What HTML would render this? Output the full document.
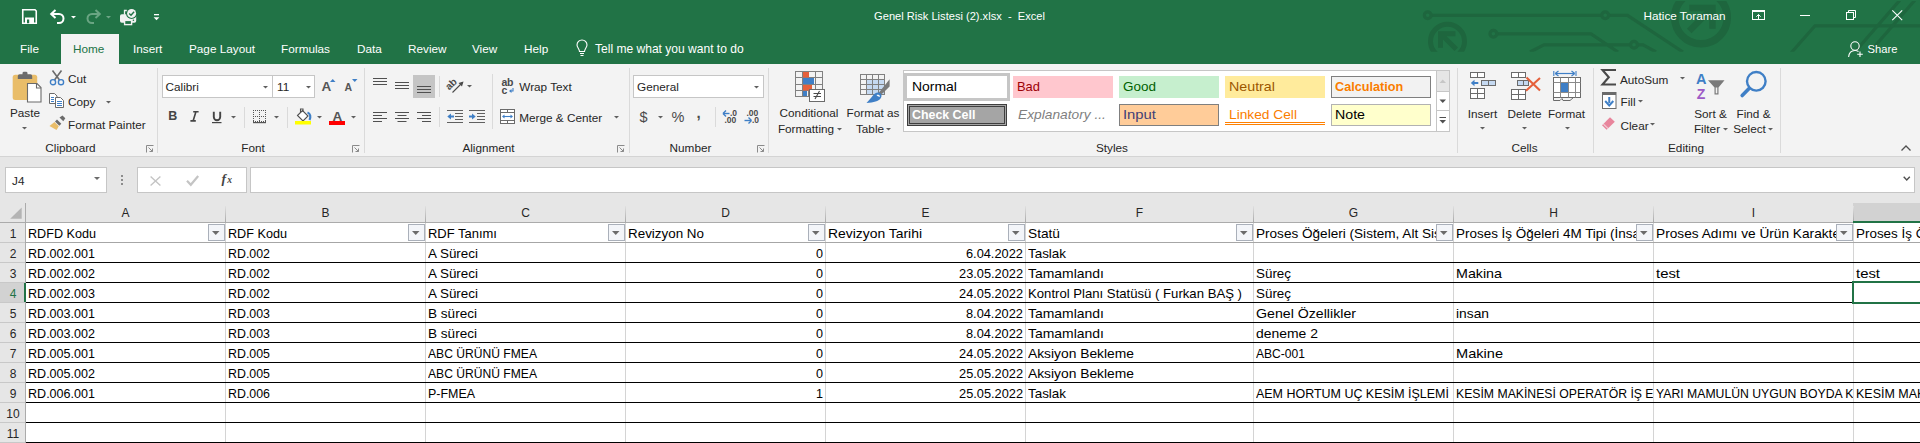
<!DOCTYPE html><html><head><meta charset="utf-8"><style>
html,body{margin:0;padding:0;}
body{width:1920px;height:443px;overflow:hidden;position:relative;background:#ffffff;font-family:'Liberation Sans', sans-serif;}
.t{position:absolute;white-space:pre;line-height:1.5;}
svg{overflow:visible}
</style></head><body>
<div style="position:absolute;left:0px;top:0px;width:1920px;height:64px;background:#217346;"></div>
<svg style="position:absolute;left:1380px;top:0px;" width="540" height="52" viewBox="0 0 540 52"><defs><clipPath id="cp"><rect x="0" y="1" width="540" height="50.8"/></clipPath></defs>
<g clip-path="url(#cp)">
<g fill="none" stroke="#1e663e" stroke-width="3.2">
<path d="M51 15.3 H221.7 M228.7 15.3 H247.5 L303 52"/>
<circle cx="47.7" cy="15.3" r="3.4"/><circle cx="225.2" cy="15.3" r="3.4"/>
<path d="M116.8 33.8 H211 L238 52 M150 52 L164 44.8 H250.6 M257.4 44.8 H263 L276 52"/>
<circle cx="113.4" cy="33.8" r="3.4"/><circle cx="254" cy="44.8" r="3.4"/>
<path d="M411 53 L435 25.8 H545"/>
<path d="M474.8 52 L520 0 M489.8 52 L535 0"/>
</g>
<circle cx="67.5" cy="41.3" r="17" fill="none" stroke="#1e663e" stroke-width="5"/>
<circle cx="321" cy="17.5" r="26.3" fill="none" stroke="#1e663e" stroke-width="7.5"/>
<path d="M58 31.2 H75.4 V36.2 H66.5 L78 47.5 L74.5 51 L63 39.5 V47.8 H58 Z" fill="#1e663e"/>
<path d="M335.7 4.7 H309.3 V11.2 H324.5 L307 28.7 L311.5 33.2 L329.2 15.5 V28.8 H335.7 Z" fill="#1e663e"/>
</g></svg>
<svg style="position:absolute;left:22px;top:9px;" width="15" height="15" viewBox="0 0 15 15"><path d="M0.75 0.75 H13 L14.25 2 V14.25 H0.75 Z" fill="none" stroke="#ffffff" stroke-width="1.6"/><rect x="3" y="8.5" width="9" height="5.75" fill="#ffffff"/><rect x="5" y="10.5" width="2.2" height="3.75" fill="#217346"/></svg>
<svg style="position:absolute;left:50px;top:9px;" width="16" height="15" viewBox="0 0 16 15"><path d="M2 5 H9 A4.5 4.5 0 0 1 9 14 H7" fill="none" stroke="#ffffff" stroke-width="2"/><path d="M5.5 1 L1.2 5 L5.5 9" fill="none" stroke="#ffffff" stroke-width="2"/></svg>
<svg style="position:absolute;left:70.0px;top:14.5px;" width="7" height="5" viewBox="0 0 7 5"><path d="M1 1 H6 L3.5 3.5 Z" fill="#ffffff"/></svg>
<svg style="position:absolute;left:85px;top:9px;" width="16" height="15" viewBox="0 0 16 15"><path d="M14 5 H7 A4.5 4.5 0 0 0 7 14 H9" fill="none" stroke="#6aa583" stroke-width="2"/><path d="M10.5 1 L14.8 5 L10.5 9" fill="none" stroke="#6aa583" stroke-width="2"/></svg>
<svg style="position:absolute;left:105.0px;top:14.5px;" width="7" height="5" viewBox="0 0 7 5"><path d="M1 1 H6 L3.5 3.5 Z" fill="#6da585"/></svg>
<svg style="position:absolute;left:120px;top:9px;" width="18" height="18" viewBox="0 0 18 18"><rect x="0" y="5.2" width="16.2" height="8.6" rx="1.8" fill="#f2f2f2"/><circle cx="11.6" cy="4.4" r="5.6" fill="#217346"/><circle cx="11.6" cy="4.4" r="4.5" fill="#f2f2f2"/><path d="M9.2 4.5 L11 6.3 L14.1 2.7" fill="none" stroke="#217346" stroke-width="1.4"/><path d="M6.8 1.5 H4.5 V5.8" fill="none" stroke="#f2f2f2" stroke-width="1.3"/><rect x="4.6" y="11.4" width="7" height="4.2" fill="#217346" stroke="#f2f2f2" stroke-width="1.4"/><circle cx="13.4" cy="11.2" r="0.8" fill="#217346"/></svg>
<svg style="position:absolute;left:153px;top:13px;" width="8" height="8" viewBox="0 0 8 8"><rect x="1" y="1" width="5" height="1.3" fill="#ffffff"/><path d="M0.6 4.2 H6.4 L3.5 7.2 Z" fill="#ffffff"/></svg>
<div class="t" style="left:659.5px;width:600px;text-align:center;top:7.83px;font-size:11.1px;color:#ffffff;font-weight:normal;">Genel Risk Listesi (2).xlsx  -  Excel</div>
<div class="t" style="left:1643.5px;top:7.12px;font-size:11.75px;color:#ffffff;font-weight:normal;">Hatice Toraman</div>
<svg style="position:absolute;left:1752px;top:10px;" width="14" height="11" viewBox="0 0 14 11"><rect x="0.5" y="0.5" width="12" height="9" fill="none" stroke="#ffffff"/><path d="M0.5 1.5 H12.5" stroke="#ffffff"/><path d="M6.5 4.5 V9.5 M4.3 6.7 L6.5 4.5 L8.7 6.7" fill="none" stroke="#ffffff"/></svg>
<div style="position:absolute;left:1800px;top:15px;width:10px;height:1px;background:#ffffff;"></div>
<svg style="position:absolute;left:1846px;top:10px;" width="11" height="11" viewBox="0 0 11 11"><rect x="0.5" y="2.5" width="7" height="7" fill="none" stroke="#ffffff"/><path d="M2.5 2.5 V0.5 H9.5 V7.5 H7.5" fill="none" stroke="#ffffff"/></svg>
<svg style="position:absolute;left:1892px;top:10px;" width="11" height="11" viewBox="0 0 11 11"><path d="M0.3 0.3 L10.2 10.2 M10.2 0.3 L0.3 10.2" stroke="#ffffff" stroke-width="1.05"/></svg>
<div style="position:absolute;left:61px;top:34px;width:58px;height:30px;background:#f3f3f3;"></div>
<div class="t" style="left:20px;top:40.12px;font-size:11.75px;color:#ffffff;font-weight:normal;">File</div>
<div class="t" style="left:73px;top:40.12px;font-size:11.75px;color:#217346;font-weight:normal;">Home</div>
<div class="t" style="left:133px;top:40.12px;font-size:11.75px;color:#ffffff;font-weight:normal;">Insert</div>
<div class="t" style="left:189px;top:40.12px;font-size:11.75px;color:#ffffff;font-weight:normal;">Page Layout</div>
<div class="t" style="left:281px;top:40.12px;font-size:11.75px;color:#ffffff;font-weight:normal;">Formulas</div>
<div class="t" style="left:357px;top:40.12px;font-size:11.75px;color:#ffffff;font-weight:normal;">Data</div>
<div class="t" style="left:408px;top:40.12px;font-size:11.75px;color:#ffffff;font-weight:normal;">Review</div>
<div class="t" style="left:472px;top:40.12px;font-size:11.75px;color:#ffffff;font-weight:normal;">View</div>
<div class="t" style="left:524px;top:40.12px;font-size:11.75px;color:#ffffff;font-weight:normal;">Help</div>
<svg style="position:absolute;left:576px;top:40px;" width="12" height="17" viewBox="0 0 12 17"><path d="M3.5 11.5 C3.5 9 1 7.5 1 5 A5 5 0 0 1 11 5 C11 7.5 8.5 9 8.5 11.5 Z" fill="none" stroke="#ffffff" stroke-width="1.1"/><path d="M4 13.5 H8 M4.5 15.5 H7.5" stroke="#ffffff" stroke-width="1.1"/></svg>
<div class="t" style="left:595px;top:39.79px;font-size:12.05px;color:#ffffff;font-weight:normal;">Tell me what you want to do</div>
<svg style="position:absolute;left:1848px;top:41px;" width="16" height="17" viewBox="0 0 16 17"><circle cx="7" cy="5" r="4.2" fill="none" stroke="#ffffff" stroke-width="1.1"/><path d="M0.6 16 C1 11.5 3.5 9.5 7 9.5 C8.5 9.5 9.6 9.9 10.5 10.4" fill="none" stroke="#ffffff" stroke-width="1.1"/><path d="M12 10.5 V16 M9.2 13.3 H14.8" stroke="#ffffff" stroke-width="1.1"/></svg>
<div class="t" style="left:1867.5px;top:40.72px;font-size:11.2px;color:#ffffff;font-weight:normal;">Share</div>
<div style="position:absolute;left:0px;top:64px;width:1920px;height:92px;background:#f3f3f3;"></div>
<div style="position:absolute;left:0px;top:156px;width:1920px;height:1px;background:#d4d4d4;"></div>
<div style="position:absolute;left:0px;top:157px;width:1920px;height:46px;background:#e6e6e6;"></div>
<svg style="position:absolute;left:12px;top:71px;" width="30" height="32" viewBox="0 0 30 32"><rect x="0.7" y="3.7" width="24.5" height="25.3" rx="2.5" fill="#e9bd69"/>
<path d="M5.8 8 V5.2 Q5.8 3.2 7.8 3.2 H10.5 V2.2 Q10.5 0.8 12 0.8 H14 Q15.5 0.8 15.5 2.2 V3.2 H18.2 Q20.2 3.2 20.2 5.2 V8 Z" fill="#6b6b6b"/>
<path d="M15.5 12.5 H25 L29 16.5 V31 H15.5 Z" fill="#ffffff" stroke="#6b6b6b" stroke-width="1.1"/>
<path d="M24.5 12.5 V17 H29" fill="none" stroke="#6b6b6b" stroke-width="1.1"/></svg>
<div class="t" style="left:-275px;width:600px;text-align:center;top:104.12px;font-size:11.75px;color:#262626;font-weight:normal;">Paste</div>
<svg style="position:absolute;left:21.0px;top:126px;" width="7" height="5" viewBox="0 0 7 5"><path d="M1 1 H6 L3.5 3.5 Z" fill="#5f5f5f"/></svg>
<svg style="position:absolute;left:49px;top:70px;" width="16" height="16" viewBox="0 0 16 16"><path d="M3.5 0.5 L10.5 10 M12.5 0.5 L5.5 10" stroke="#6b6b6b" stroke-width="1.6"/><circle cx="4" cy="12.2" r="2.6" fill="none" stroke="#3f7fc6" stroke-width="1.4"/><circle cx="12" cy="12.2" r="2.6" fill="none" stroke="#3f7fc6" stroke-width="1.4"/></svg>
<div class="t" style="left:68px;top:70.12px;font-size:11.75px;color:#262626;font-weight:normal;">Cut</div>
<svg style="position:absolute;left:49px;top:93px;" width="16" height="16" viewBox="0 0 16 16"><path d="M0.5 0.5 H5.5 L8 3 V10.5 H0.5 Z" fill="#fff" stroke="#6b6b6b"/><path d="M2 4.5 H5 M2 6.5 H5 M2 8.5 H5" stroke="#3f7fc6"/><path d="M6.5 4.5 H11.5 L14.5 7.5 V14.5 H6.5 Z" fill="#fff" stroke="#6b6b6b"/><path d="M8 8.5 H13 M8 10.5 H13 M8 12.5 H13" stroke="#3f7fc6"/></svg>
<div class="t" style="left:68px;top:93.12px;font-size:11.75px;color:#262626;font-weight:normal;">Copy</div>
<svg style="position:absolute;left:105.0px;top:100px;" width="7" height="5" viewBox="0 0 7 5"><path d="M1 1 H6 L3.5 3.5 Z" fill="#5f5f5f"/></svg>
<svg style="position:absolute;left:49px;top:115px;" width="17" height="16" viewBox="0 0 17 16"><path d="M10.5 2.5 L13.5 0.5 L16.3 3.3 L14.3 6.3 Z" fill="#6b6b6b"/><path d="M8 4.5 L12.3 8.8 L10.3 10.8 L6 6.5 Z" fill="#6b6b6b"/><path d="M5.5 7 L9.8 11.3 L7.5 15 L0.5 11 Z" fill="#e9bd69"/></svg>
<div class="t" style="left:68px;top:116.12px;font-size:11.75px;color:#262626;font-weight:normal;">Format Painter</div>
<div class="t" style="left:-229.5px;width:600px;text-align:center;top:138.92px;font-size:11.75px;color:#262626;font-weight:normal;">Clipboard</div>
<svg style="position:absolute;left:146px;top:145px;" width="8" height="8" viewBox="0 0 8 8"><path d="M0.5 7.5 V0.5 H7.5" fill="none" stroke="#8a8a8a"/><path d="M2.5 2.5 L6.5 6.5 M3.5 6.5 H6.5 V3.5" fill="none" stroke="#8a8a8a"/></svg>
<div style="position:absolute;left:157px;top:68px;width:1px;height:85px;background:#dadada;"></div>
<div style="position:absolute;left:162px;top:75px;width:111px;height:23px;background:#ffffff;border:1px solid #c6c6c6;box-sizing:border-box;"></div>
<div style="position:absolute;left:272px;top:75px;width:43px;height:23px;background:#ffffff;border:1px solid #c6c6c6;box-sizing:border-box;"></div>
<div class="t" style="left:165.5px;top:78.12px;font-size:11.75px;color:#262626;font-weight:normal;">Calibri</div>
<svg style="position:absolute;left:262.0px;top:85px;" width="7" height="5" viewBox="0 0 7 5"><path d="M1 1 H6 L3.5 3.5 Z" fill="#5f5f5f"/></svg>
<div class="t" style="left:277px;top:78.12px;font-size:11.75px;color:#262626;font-weight:normal;">11</div>
<svg style="position:absolute;left:305.0px;top:85px;" width="7" height="5" viewBox="0 0 7 5"><path d="M1 1 H6 L3.5 3.5 Z" fill="#5f5f5f"/></svg>
<div class="t" style="left:321.5px;top:77.20px;font-size:13.5px;color:#555555;font-weight:bold;">A</div>
<svg style="position:absolute;left:330px;top:79px;" width="6" height="4" viewBox="0 0 6 4"><path d="M0 3 H5.5 L2.75 0 Z" fill="#3f7fc6"/></svg>
<div class="t" style="left:344.5px;top:80.49px;font-size:10.5px;color:#555555;font-weight:bold;">A</div>
<svg style="position:absolute;left:352px;top:79px;" width="6" height="4" viewBox="0 0 6 4"><path d="M0 0 H5.5 L2.75 3 Z" fill="#3f7fc6"/></svg>
<div class="t" style="left:168.2px;top:107.29px;font-size:12.5px;color:#444444;font-weight:bold;">B</div>
<svg style="position:absolute;left:190px;top:111px;" width="9" height="11" viewBox="0 0 9 11"><path d="M3.2 0.8 H8.6 M0.4 9.9 H5.8 M5.9 0.8 L3.1 9.9" fill="none" stroke="#444444" stroke-width="1.6"/></svg>
<svg style="position:absolute;left:212px;top:111px;" width="10" height="13" viewBox="0 0 10 13"><path d="M1.8 0.8 V6 A3.2 3.2 0 0 0 8.2 6 V0.8" fill="none" stroke="#444444" stroke-width="1.9"/><rect x="0" y="11" width="9.5" height="1.2" fill="#444444"/></svg>
<svg style="position:absolute;left:230.0px;top:115px;" width="7" height="5" viewBox="0 0 7 5"><path d="M1 1 H6 L3.5 3.5 Z" fill="#5f5f5f"/></svg>
<div style="position:absolute;left:244px;top:107px;width:1px;height:21px;background:#dadada;"></div>
<svg style="position:absolute;left:253px;top:110px;" width="14" height="14" viewBox="0 0 14 14"><rect x="0" y="0" width="1" height="1" fill="#555"/><rect x="2" y="0" width="1" height="1" fill="#555"/><rect x="4" y="0" width="1" height="1" fill="#555"/><rect x="6" y="0" width="1" height="1" fill="#555"/><rect x="8" y="0" width="1" height="1" fill="#555"/><rect x="10" y="0" width="1" height="1" fill="#555"/><rect x="12" y="0" width="1" height="1" fill="#555"/><rect x="0" y="6" width="1" height="1" fill="#555"/><rect x="2" y="6" width="1" height="1" fill="#555"/><rect x="4" y="6" width="1" height="1" fill="#555"/><rect x="6" y="6" width="1" height="1" fill="#555"/><rect x="8" y="6" width="1" height="1" fill="#555"/><rect x="10" y="6" width="1" height="1" fill="#555"/><rect x="12" y="6" width="1" height="1" fill="#555"/><rect x="0" y="11" width="1" height="1" fill="#555"/><rect x="2" y="11" width="1" height="1" fill="#555"/><rect x="4" y="11" width="1" height="1" fill="#555"/><rect x="6" y="11" width="1" height="1" fill="#555"/><rect x="8" y="11" width="1" height="1" fill="#555"/><rect x="10" y="11" width="1" height="1" fill="#555"/><rect x="12" y="11" width="1" height="1" fill="#555"/><rect x="0" y="2" width="1" height="1" fill="#555"/><rect x="0" y="4" width="1" height="1" fill="#555"/><rect x="0" y="8" width="1" height="1" fill="#555"/><rect x="0" y="10" width="1" height="1" fill="#555"/><rect x="6" y="2" width="1" height="1" fill="#555"/><rect x="6" y="4" width="1" height="1" fill="#555"/><rect x="6" y="8" width="1" height="1" fill="#555"/><rect x="6" y="10" width="1" height="1" fill="#555"/><rect x="12" y="2" width="1" height="1" fill="#555"/><rect x="12" y="4" width="1" height="1" fill="#555"/><rect x="12" y="8" width="1" height="1" fill="#555"/><rect x="12" y="10" width="1" height="1" fill="#555"/><rect x="0" y="12" width="13" height="1.2" fill="#555"/></svg>
<svg style="position:absolute;left:273.0px;top:115px;" width="7" height="5" viewBox="0 0 7 5"><path d="M1 1 H6 L3.5 3.5 Z" fill="#5f5f5f"/></svg>
<div style="position:absolute;left:287px;top:107px;width:1px;height:21px;background:#dadada;"></div>
<svg style="position:absolute;left:294px;top:108px;" width="18" height="18" viewBox="0 0 18 18"><path d="M3.5 7.5 L8.5 2.5 L14 8 L9 13 Z" fill="#fff" stroke="#505050" stroke-width="1.1"/><path d="M6.5 5 V1 H9 V4" fill="none" stroke="#505050" stroke-width="1.1"/><path d="M13.5 4.5 C16.5 5.5 17 9 15.5 12" fill="none" stroke="#3f7fc6" stroke-width="2.2"/><rect x="1" y="13" width="16" height="3.5" fill="#ffff00"/></svg>
<svg style="position:absolute;left:316.0px;top:115px;" width="7" height="5" viewBox="0 0 7 5"><path d="M1 1 H6 L3.5 3.5 Z" fill="#5f5f5f"/></svg>
<div class="t" style="left:332.5px;top:106.70px;font-size:13.5px;color:#555555;font-weight:bold;">A</div>
<div style="position:absolute;left:329px;top:121px;width:16px;height:4px;background:#ff0000;"></div>
<svg style="position:absolute;left:350.0px;top:115px;" width="7" height="5" viewBox="0 0 7 5"><path d="M1 1 H6 L3.5 3.5 Z" fill="#5f5f5f"/></svg>
<div class="t" style="left:-47px;width:600px;text-align:center;top:138.92px;font-size:11.75px;color:#262626;font-weight:normal;">Font</div>
<svg style="position:absolute;left:352px;top:145px;" width="8" height="8" viewBox="0 0 8 8"><path d="M0.5 7.5 V0.5 H7.5" fill="none" stroke="#8a8a8a"/><path d="M2.5 2.5 L6.5 6.5 M3.5 6.5 H6.5 V3.5" fill="none" stroke="#8a8a8a"/></svg>
<div style="position:absolute;left:364px;top:68px;width:1px;height:85px;background:#dadada;"></div>
<div style="position:absolute;left:413px;top:75px;width:22px;height:23px;background:#c5c5c5;"></div>
<svg style="position:absolute;left:373px;top:74px;" width="22" height="60" viewBox="0 0 22 60"><rect x="0" y="4" width="14" height="1" fill="#505050"/><rect x="0" y="7" width="14" height="1" fill="#505050"/><rect x="0" y="10" width="14" height="1" fill="#505050"/></svg>
<svg style="position:absolute;left:395px;top:74px;" width="22" height="60" viewBox="0 0 22 60"><rect x="0" y="8" width="14" height="1" fill="#505050"/><rect x="0" y="11" width="14" height="1" fill="#505050"/><rect x="0" y="14" width="14" height="1" fill="#505050"/></svg>
<svg style="position:absolute;left:417px;top:74px;" width="22" height="60" viewBox="0 0 22 60"><rect x="0" y="12" width="14" height="1" fill="#505050"/><rect x="0" y="15" width="14" height="1" fill="#505050"/><rect x="0" y="18" width="14" height="1" fill="#505050"/></svg>
<div style="position:absolute;left:439px;top:76px;width:1px;height:21px;background:#dadada;"></div>
<svg style="position:absolute;left:446px;top:78px;" width="20" height="16" viewBox="0 0 20 16"><text x="0" y="0" font-size="10" font-weight="bold" fill="#4a4a4a" font-family="Liberation Sans" transform="translate(3.2 12.6) rotate(-45)">ab</text><path d="M6.5 14.5 L16.5 4.5" fill="none" stroke="#4a4a4a" stroke-width="1.1"/><path d="M17.5 3.5 L12.5 5 L16 8.5 Z" fill="#4a4a4a"/></svg>
<svg style="position:absolute;left:466.0px;top:84px;" width="7" height="5" viewBox="0 0 7 5"><path d="M1 1 H6 L3.5 3.5 Z" fill="#5f5f5f"/></svg>
<svg style="position:absolute;left:373px;top:74px;" width="22" height="60" viewBox="0 0 22 60"><rect x="0" y="38" width="14" height="1" fill="#505050"/><rect x="0" y="41" width="9" height="1" fill="#505050"/><rect x="0" y="44" width="14" height="1" fill="#505050"/><rect x="0" y="47" width="9" height="1" fill="#505050"/></svg>
<svg style="position:absolute;left:395px;top:74px;" width="22" height="60" viewBox="0 0 22 60"><rect x="0" y="38" width="14" height="1" fill="#505050"/><rect x="2.5" y="41" width="9" height="1" fill="#505050"/><rect x="0" y="44" width="14" height="1" fill="#505050"/><rect x="2.5" y="47" width="9" height="1" fill="#505050"/></svg>
<svg style="position:absolute;left:417px;top:74px;" width="22" height="60" viewBox="0 0 22 60"><rect x="0" y="38" width="14" height="1" fill="#505050"/><rect x="5" y="41" width="9" height="1" fill="#505050"/><rect x="0" y="44" width="14" height="1" fill="#505050"/><rect x="5" y="47" width="9" height="1" fill="#505050"/></svg>
<div style="position:absolute;left:439px;top:107px;width:1px;height:20px;background:#dadada;"></div>
<svg style="position:absolute;left:447px;top:109px;" width="17" height="15" viewBox="0 0 17 15"><path d="M0 1.5 H16 M8 4.5 H16 M8 7.5 H16 M8 10.5 H16 M0 13.5 H16" stroke="#606060"/><path d="M2.5 7.5 H7" stroke="#3f7fc6" stroke-width="2"/><path d="M0.3 7.5 L4 4.5 V10.5 Z" fill="#3f7fc6"/></svg>
<svg style="position:absolute;left:469px;top:109px;" width="17" height="15" viewBox="0 0 17 15"><path d="M0 1.5 H16 M8 4.5 H16 M8 7.5 H16 M8 10.5 H16 M0 13.5 H16" stroke="#606060"/><path d="M0 7.5 H4.5" stroke="#3f7fc6" stroke-width="2"/><path d="M6.7 7.5 L3 4.5 V10.5 Z" fill="#3f7fc6"/></svg>
<div style="position:absolute;left:492px;top:74px;width:1px;height:55px;background:#dadada;"></div>
<svg style="position:absolute;left:501px;top:77px;" width="16" height="18" viewBox="0 0 16 18"><text x="0.5" y="9" font-size="10.5" font-weight="bold" fill="#4a4a4a" font-family="Liberation Sans" textLength="12">ab</text><text x="0.5" y="16.5" font-size="10.5" font-weight="bold" fill="#4a4a4a" font-family="Liberation Sans">c</text><path d="M12 11 V14 H9" fill="none" stroke="#3f7fc6" stroke-width="1.1"/><path d="M8 14 L10.5 12 V16 Z" fill="#3f7fc6"/></svg>
<div class="t" style="left:519.3px;top:78.12px;font-size:11.75px;color:#262626;font-weight:normal;">Wrap Text</div>
<svg style="position:absolute;left:500px;top:109px;" width="16" height="16" viewBox="0 0 16 16"><rect x="0.5" y="0.5" width="14" height="14" fill="#fff" stroke="#6b6b6b"/><path d="M0.5 3.5 H14.5 M0.5 11.5 H14.5 M7.5 0.5 V3.5 M7.5 11.5 V14.5" stroke="#6b6b6b"/><path d="M3 7.5 H12" stroke="#3f7fc6" stroke-width="1.1"/><path d="M2 7.5 L4.5 5.5 V9.5 Z M13 7.5 L10.5 5.5 V9.5 Z" fill="#3f7fc6"/></svg>
<div class="t" style="left:519.3px;top:109.12px;font-size:11.75px;color:#262626;font-weight:normal;">Merge &amp; Center</div>
<svg style="position:absolute;left:613.0px;top:115px;" width="7" height="5" viewBox="0 0 7 5"><path d="M1 1 H6 L3.5 3.5 Z" fill="#5f5f5f"/></svg>
<div class="t" style="left:188.5px;width:600px;text-align:center;top:138.92px;font-size:11.75px;color:#262626;font-weight:normal;">Alignment</div>
<svg style="position:absolute;left:617px;top:145px;" width="8" height="8" viewBox="0 0 8 8"><path d="M0.5 7.5 V0.5 H7.5" fill="none" stroke="#8a8a8a"/><path d="M2.5 2.5 L6.5 6.5 M3.5 6.5 H6.5 V3.5" fill="none" stroke="#8a8a8a"/></svg>
<div style="position:absolute;left:629px;top:68px;width:1px;height:85px;background:#dadada;"></div>
<div style="position:absolute;left:633px;top:75px;width:131px;height:23px;background:#ffffff;border:1px solid #c6c6c6;box-sizing:border-box;"></div>
<div class="t" style="left:637px;top:78.12px;font-size:11.75px;color:#262626;font-weight:normal;">General</div>
<svg style="position:absolute;left:753.0px;top:85px;" width="7" height="5" viewBox="0 0 7 5"><path d="M1 1 H6 L3.5 3.5 Z" fill="#5f5f5f"/></svg>
<div class="t" style="left:639.5px;top:106.60px;font-size:14.5px;color:#4a4a4a;font-weight:normal;">$</div>
<svg style="position:absolute;left:657.0px;top:115px;" width="7" height="5" viewBox="0 0 7 5"><path d="M1 1 H6 L3.5 3.5 Z" fill="#5f5f5f"/></svg>
<div class="t" style="left:671.5px;top:107.10px;font-size:14.5px;color:#4a4a4a;font-weight:normal;">%</div>
<div class="t" style="left:696.5px;top:102.05px;font-size:15px;color:#4a4a4a;font-weight:bold;">,</div>
<div style="position:absolute;left:715px;top:107px;width:1px;height:20px;background:#dadada;"></div>
<svg style="position:absolute;left:722px;top:109px;" width="17" height="15" viewBox="0 0 17 15"><text x="8" y="6.8" font-size="8.5" font-weight="bold" fill="#4a4a4a" font-family="Liberation Sans">.0</text><text x="2.5" y="14" font-size="8.5" font-weight="bold" fill="#4a4a4a" font-family="Liberation Sans">.00</text><path d="M1.5 4.5 H7.5" stroke="#3f7fc6" stroke-width="1.4"/><path d="M1 4.5 L4 1.5 M1 4.5 L4 7.5" fill="none" stroke="#3f7fc6" stroke-width="1.4"/></svg>
<svg style="position:absolute;left:744px;top:109px;" width="17" height="15" viewBox="0 0 17 15"><text x="2.5" y="6.8" font-size="8.5" font-weight="bold" fill="#4a4a4a" font-family="Liberation Sans">.00</text><text x="8" y="14" font-size="8.5" font-weight="bold" fill="#4a4a4a" font-family="Liberation Sans">.0</text><path d="M0.5 11.5 H7" stroke="#3f7fc6" stroke-width="1.4"/><path d="M7.5 11.5 L4.5 8.5 M7.5 11.5 L4.5 14.5" fill="none" stroke="#3f7fc6" stroke-width="1.4"/></svg>
<div class="t" style="left:390.5px;width:600px;text-align:center;top:138.92px;font-size:11.75px;color:#262626;font-weight:normal;">Number</div>
<svg style="position:absolute;left:757px;top:145px;" width="8" height="8" viewBox="0 0 8 8"><path d="M0.5 7.5 V0.5 H7.5" fill="none" stroke="#8a8a8a"/><path d="M2.5 2.5 L6.5 6.5 M3.5 6.5 H6.5 V3.5" fill="none" stroke="#8a8a8a"/></svg>
<div style="position:absolute;left:768px;top:68px;width:1px;height:85px;background:#dadada;"></div>
<svg style="position:absolute;left:795px;top:71px;" width="32" height="32" viewBox="0 0 32 32"><g fill="none" stroke="#808080" stroke-width="1"><rect x="0.5" y="0.5" width="27" height="25"/><path d="M7.5 0.5 V25.5 M13.5 0.5 V25.5 M20.5 0.5 V25.5 M0.5 6.5 H27.5 M0.5 13.5 H27.5 M0.5 19.5 H27.5"/></g>
<rect x="8" y="1" width="6" height="5.5" fill="#e5603b"/><rect x="8" y="7" width="11" height="6" fill="#3f7fc6"/><rect x="8" y="14" width="9" height="5.5" fill="#e5603b"/><rect x="8" y="20" width="4" height="5" fill="#3f7fc6"/>
<rect x="14.5" y="18.5" width="15" height="12" fill="#fff" stroke="#6b6b6b"/><path d="M18.5 22.5 H26 M18.5 25.5 H26 M24.5 20 L20 28" fill="none" stroke="#4a4a4a" stroke-width="1.1"/></svg>
<div class="t" style="left:509px;width:600px;text-align:center;top:104.12px;font-size:11.75px;color:#262626;font-weight:normal;">Conditional</div>
<div class="t" style="left:506px;width:600px;text-align:center;top:120.12px;font-size:11.75px;color:#262626;font-weight:normal;">Formatting</div>
<svg style="position:absolute;left:836.0px;top:127px;" width="7" height="5" viewBox="0 0 7 5"><path d="M1 1 H6 L3.5 3.5 Z" fill="#5f5f5f"/></svg>
<svg style="position:absolute;left:860px;top:74px;" width="32" height="30" viewBox="0 0 32 30"><rect x="7" y="6" width="17" height="14" fill="#c5d9f1"/>
<g fill="none" stroke="#808080" stroke-width="1"><rect x="0.5" y="0.5" width="24" height="20"/><path d="M6.5 0.5 V20.5 M12.5 0.5 V20.5 M18.5 0.5 V20.5 M0.5 5.5 H24.5 M0.5 10.5 H24.5 M0.5 15.5 H24.5"/></g>
<path d="M29.6 5.2 V12.5 L23.5 18.5 L21 16 Z" fill="#7a7a7a"/><path d="M22 15 L24.5 17.5 L20.5 21 L18.5 19 Z" fill="#7a7a7a"/>
<path d="M18.5 18.5 C21.5 19 22.5 22 20.5 24.5 C18.5 27 14 28.5 6.5 29 C10 25.5 12.5 21.5 15 19.5 C16 18.8 17.3 18.4 18.5 18.5 Z" fill="#3f7fc6"/><path d="M16.5 21 C18 20.5 20 21 20 22.5 C19 23 17.5 22.5 16.5 21 Z" fill="#ffffff"/></svg>
<div class="t" style="left:573px;width:600px;text-align:center;top:104.12px;font-size:11.75px;color:#262626;font-weight:normal;">Format as</div>
<div class="t" style="left:570px;width:600px;text-align:center;top:120.12px;font-size:11.75px;color:#262626;font-weight:normal;">Table</div>
<svg style="position:absolute;left:885.0px;top:127px;" width="7" height="5" viewBox="0 0 7 5"><path d="M1 1 H6 L3.5 3.5 Z" fill="#5f5f5f"/></svg>
<div style="position:absolute;left:903px;top:70px;width:547px;height:62px;background:#ffffff;border:1px solid #c6c6c6;box-sizing:border-box;"></div>
<div style="position:absolute;left:904px;top:73px;width:106px;height:28px;background:#ffffff;border:3px solid #c6c6c6;box-sizing:border-box;"></div>
<div class="t" style="left:911.5px;top:76.76px;font-size:12.9px;color:#000000;font-weight:normal;transform:scaleX(1.0824);transform-origin:0 0;">Normal</div>
<div style="position:absolute;left:1013px;top:76px;width:100px;height:22px;background:#ffc7ce;"></div>
<div class="t" style="left:1017px;top:76.76px;font-size:12.9px;color:#9c0006;font-weight:normal;transform:scaleX(1.0020);transform-origin:0 0;">Bad</div>
<div style="position:absolute;left:1119px;top:76px;width:100px;height:22px;background:#c6efce;"></div>
<div class="t" style="left:1123px;top:76.76px;font-size:12.9px;color:#006100;font-weight:normal;transform:scaleX(1.0457);transform-origin:0 0;">Good</div>
<div style="position:absolute;left:1225px;top:76px;width:100px;height:22px;background:#ffeb9c;"></div>
<div class="t" style="left:1229px;top:76.76px;font-size:12.9px;color:#9c5700;font-weight:normal;transform:scaleX(1.1062);transform-origin:0 0;">Neutral</div>
<div style="position:absolute;left:1331px;top:76px;width:100px;height:22px;background:#f2f2f2;border:1px solid #7f7f7f;box-sizing:border-box;"></div>
<div class="t" style="left:1335px;top:76.76px;font-size:12.9px;color:#fa7d00;font-weight:bold;transform:scaleX(0.9816);transform-origin:0 0;">Calculation</div>
<div style="position:absolute;left:907px;top:104px;width:100px;height:22px;background:#a5a5a5;border:3px double #3f3f3f;box-sizing:border-box;"></div>
<div class="t" style="left:911.5px;top:104.86px;font-size:12.9px;color:#ffffff;font-weight:bold;transform:scaleX(0.9608);transform-origin:0 0;">Check Cell</div>
<div class="t" style="left:1017.5px;top:104.86px;font-size:12.9px;color:#7f7f7f;font-weight:normal;font-style:italic;transform:scaleX(1.0672);transform-origin:0 0;">Explanatory ...</div>
<div style="position:absolute;left:1119px;top:104px;width:100px;height:22px;background:#ffcc99;border:1px solid #7f7f7f;box-sizing:border-box;"></div>
<div class="t" style="left:1123px;top:104.86px;font-size:12.9px;color:#3f3f76;font-weight:normal;transform:scaleX(1.1502);transform-origin:0 0;">Input</div>
<div class="t" style="left:1229px;top:104.86px;font-size:12.9px;color:#fa7d00;font-weight:normal;transform:scaleX(1.0655);transform-origin:0 0;">Linked Cell</div>
<div style="position:absolute;left:1225px;top:122px;width:100px;height:1px;background:#ff8001;"></div>
<div style="position:absolute;left:1225px;top:124px;width:100px;height:1px;background:#ff8001;"></div>
<div style="position:absolute;left:1331px;top:104px;width:100px;height:22px;background:#ffffcc;border:1px solid #b2b2b2;box-sizing:border-box;"></div>
<div class="t" style="left:1335px;top:104.86px;font-size:12.9px;color:#000000;font-weight:normal;transform:scaleX(1.1010);transform-origin:0 0;">Note</div>
<div style="position:absolute;left:1436px;top:70px;width:14px;height:62px;background:#ffffff;border:1px solid #c6c6c6;box-sizing:border-box;"></div>
<div style="position:absolute;left:1437px;top:71px;width:12px;height:20px;background:#e6e6e6;"></div>
<svg style="position:absolute;left:1439px;top:79px;" width="8" height="5" viewBox="0 0 8 5"><path d="M0.5 4 H7 L3.75 0.5 Z" fill="#c6c6c6"/></svg>
<div style="position:absolute;left:1436px;top:91px;width:14px;height:1px;background:#c6c6c6;"></div>
<div style="position:absolute;left:1436px;top:110px;width:14px;height:1px;background:#c6c6c6;"></div>
<svg style="position:absolute;left:1439px;top:99px;" width="8" height="5" viewBox="0 0 8 5"><path d="M0.5 0.5 H7 L3.75 4 Z" fill="#505050"/></svg>
<svg style="position:absolute;left:1439px;top:117px;" width="8" height="8" viewBox="0 0 8 8"><path d="M0.5 0.5 H7" stroke="#505050"/><path d="M0.5 3 H7 L3.75 6.5 Z" fill="#505050"/></svg>
<div class="t" style="left:812px;width:600px;text-align:center;top:138.92px;font-size:11.75px;color:#262626;font-weight:normal;">Styles</div>
<div style="position:absolute;left:1457px;top:68px;width:1px;height:85px;background:#dadada;"></div>
<svg style="position:absolute;left:1470px;top:72px;" width="28" height="28" viewBox="0 0 28 28"><g fill="#fff" stroke="#6b6b6b" stroke-width="1"><rect x="0.5" y="0.5" width="14" height="5"/><rect x="0.5" y="16.5" width="14" height="10"/></g>
<path d="M7.5 0.5 V5.5 M7.5 16.5 V26.5 M0.5 21.5 H14.5" stroke="#6b6b6b"/>
<rect x="11.5" y="8.5" width="14" height="5" fill="#c5d9f1" stroke="#6b6b6b"/><path d="M18.5 8.5 V13.5" stroke="#6b6b6b"/>
<path d="M3 11 H8.3" stroke="#3f7fc6" stroke-width="2"/><path d="M0.8 11 L4.5 7.8 V14.2 Z" fill="#3f7fc6"/></svg>
<div class="t" style="left:1182.5px;width:600px;text-align:center;top:104.62px;font-size:11.75px;color:#262626;font-weight:normal;">Insert</div>
<svg style="position:absolute;left:1479.0px;top:126px;" width="7" height="5" viewBox="0 0 7 5"><path d="M1 1 H6 L3.5 3.5 Z" fill="#5f5f5f"/></svg>
<svg style="position:absolute;left:1511px;top:72px;" width="31" height="28" viewBox="0 0 31 28"><g fill="#fff" stroke="#6b6b6b" stroke-width="1"><rect x="0.5" y="0.5" width="14" height="5"/><rect x="0.5" y="17.5" width="14" height="10"/></g>
<path d="M7.5 0.5 V5.5 M7.5 17.5 V27.5 M0.5 22.5 H14.5" stroke="#6b6b6b"/>
<rect x="6.5" y="8.5" width="11" height="5" fill="#c5d9f1" stroke="#6b6b6b"/><path d="M12.5 8.5 V13.5" stroke="#6b6b6b"/>
<path d="M15.5 5.5 L29 18.5 M29 6 L15 18.8" stroke="#e5603b" stroke-width="2.1"/></svg>
<div class="t" style="left:1224.5px;width:600px;text-align:center;top:104.62px;font-size:11.75px;color:#262626;font-weight:normal;">Delete</div>
<svg style="position:absolute;left:1521.0px;top:126px;" width="7" height="5" viewBox="0 0 7 5"><path d="M1 1 H6 L3.5 3.5 Z" fill="#5f5f5f"/></svg>
<svg style="position:absolute;left:1553px;top:70px;" width="30" height="33" viewBox="0 0 30 33"><path d="M0.8 1 V6 M23 1 V6" stroke="#3f7fc6" stroke-width="1.1"/><path d="M3 3.5 H21" stroke="#3f7fc6" stroke-width="1.2"/><path d="M2.2 3.5 L5.5 1 M2.2 3.5 L5.5 6 M21.8 3.5 L18.5 1 M21.8 3.5 L18.5 6" fill="none" stroke="#3f7fc6" stroke-width="1.2"/>
<rect x="0.5" y="7.5" width="27" height="20" fill="#fff" stroke="#6b6b6b"/><path d="M7.5 7.5 V27.5 M15.5 7.5 V27.5 M22.5 7.5 V27.5 M0.5 12.5 H27.5 M0.5 22.5 H27.5" stroke="#8a8a8a"/>
<rect x="8" y="13" width="7" height="9" fill="#3f7fc6"/>
<path d="M0.5 27.5 V30.5 H7 L9 28.5 L10 30.5 H17 L20.5 27.5" fill="none" stroke="#6b6b6b"/></svg>
<div class="t" style="left:1266.5px;width:600px;text-align:center;top:104.62px;font-size:11.75px;color:#262626;font-weight:normal;">Format</div>
<svg style="position:absolute;left:1564.0px;top:126px;" width="7" height="5" viewBox="0 0 7 5"><path d="M1 1 H6 L3.5 3.5 Z" fill="#5f5f5f"/></svg>
<div class="t" style="left:1224.5px;width:600px;text-align:center;top:138.92px;font-size:11.75px;color:#262626;font-weight:normal;">Cells</div>
<div style="position:absolute;left:1593px;top:68px;width:1px;height:85px;background:#dadada;"></div>
<svg style="position:absolute;left:1601px;top:69px;" width="16" height="17" viewBox="0 0 16 17"><path d="M15 1 H1.5 L7.8 8.2 L1.5 15.5 H15" fill="none" stroke="#4a4a4a" stroke-width="2.1" stroke-linejoin="miter"/></svg>
<div class="t" style="left:1620px;top:70.87px;font-size:11.75px;color:#262626;font-weight:normal;">AutoSum</div>
<svg style="position:absolute;left:1679.0px;top:76px;" width="7" height="5" viewBox="0 0 7 5"><path d="M1 1 H6 L3.5 3.5 Z" fill="#5f5f5f"/></svg>
<svg style="position:absolute;left:1602px;top:92px;" width="15" height="18" viewBox="0 0 15 18"><rect x="0.5" y="0.5" width="13.5" height="16" fill="#fff" stroke="#6b6b6b"/><rect x="0.5" y="0.5" width="13.5" height="2.5" fill="#6b6b6b"/><path d="M7.25 5 V11" stroke="#3f7fc6" stroke-width="2"/><path d="M3.2 9 L7.25 13.5 L11.3 9" fill="none" stroke="#3f7fc6" stroke-width="2"/></svg>
<div class="t" style="left:1620.5px;top:93.12px;font-size:11.75px;color:#262626;font-weight:normal;">Fill</div>
<svg style="position:absolute;left:1637.0px;top:99px;" width="7" height="5" viewBox="0 0 7 5"><path d="M1 1 H6 L3.5 3.5 Z" fill="#5f5f5f"/></svg>
<svg style="position:absolute;left:1601px;top:116px;" width="15" height="15" viewBox="0 0 15 15"><path d="M9 1.2 L13.8 5.8 L7.5 12 L2.8 7.5 Z" fill="#e8859c"/><path d="M2.8 7.5 L7.5 12 L5.6 13.8 L1 9.3 Z" fill="#e8859c"/><path d="M2.3 8 L7 12.5" stroke="#f3f3f3" stroke-width="0.9"/></svg>
<div class="t" style="left:1620.5px;top:116.62px;font-size:11.75px;color:#262626;font-weight:normal;">Clear</div>
<svg style="position:absolute;left:1649.0px;top:122px;" width="7" height="5" viewBox="0 0 7 5"><path d="M1 1 H6 L3.5 3.5 Z" fill="#5f5f5f"/></svg>
<svg style="position:absolute;left:1695px;top:72px;" width="32" height="28" viewBox="0 0 32 28"><text x="1" y="12.3" font-size="14.5" font-weight="bold" fill="#3f7fc6" font-family="Liberation Sans">A</text><text x="1.8" y="27" font-size="14" font-weight="bold" fill="#9d5bc6" font-family="Liberation Sans">Z</text><path d="M13 8.2 H29.5 L23.5 15.5 V22.5 H19.5 V15.5 Z" fill="#7a7a7a"/><path d="M20.7 15.5 V21.3 H22.3 V15.5" fill="#f3f3f3"/></svg>
<div class="t" style="left:1410.5px;width:600px;text-align:center;top:104.62px;font-size:11.75px;color:#262626;font-weight:normal;">Sort &amp;</div>
<div class="t" style="left:1407px;width:600px;text-align:center;top:120.12px;font-size:11.75px;color:#262626;font-weight:normal;">Filter</div>
<svg style="position:absolute;left:1721.5px;top:127px;" width="7" height="5" viewBox="0 0 7 5"><path d="M1 1 H6 L3.5 3.5 Z" fill="#5f5f5f"/></svg>
<svg style="position:absolute;left:1739px;top:69px;" width="30" height="30" viewBox="0 0 30 30"><circle cx="17.3" cy="12.3" r="9.3" fill="none" stroke="#3f7fc6" stroke-width="2.4"/><path d="M10.3 19.3 L3.2 26.5" stroke="#3f7fc6" stroke-width="3.6" stroke-linecap="round"/></svg>
<div class="t" style="left:1453.5px;width:600px;text-align:center;top:104.62px;font-size:11.75px;color:#262626;font-weight:normal;">Find &amp;</div>
<div class="t" style="left:1449.5px;width:600px;text-align:center;top:120.12px;font-size:11.75px;color:#262626;font-weight:normal;">Select</div>
<svg style="position:absolute;left:1766.5px;top:127px;" width="7" height="5" viewBox="0 0 7 5"><path d="M1 1 H6 L3.5 3.5 Z" fill="#5f5f5f"/></svg>
<div class="t" style="left:1386px;width:600px;text-align:center;top:138.92px;font-size:11.75px;color:#262626;font-weight:normal;">Editing</div>
<div style="position:absolute;left:1780px;top:68px;width:1px;height:85px;background:#dadada;"></div>
<svg style="position:absolute;left:1901px;top:145px;" width="10" height="6" viewBox="0 0 10 6"><path d="M0.5 5.5 L5 1 L9.5 5.5" fill="none" stroke="#505050" stroke-width="1.3"/></svg>
<div style="position:absolute;left:5px;top:167px;width:102px;height:26px;background:#ffffff;border:1px solid #c6c6c6;box-sizing:border-box;"></div>
<div class="t" style="left:12px;top:171.82px;font-size:11.75px;color:#262626;font-weight:normal;">J4</div>
<svg style="position:absolute;left:92.5px;top:176px;" width="8" height="5" viewBox="0 0 8 5"><path d="M1 1 H7 L4.0 4.0 Z" fill="#6b6b6b"/></svg>
<div style="position:absolute;left:121px;top:175px;width:2px;height:2px;background:#8c8c8c;"></div>
<div style="position:absolute;left:121px;top:179px;width:2px;height:2px;background:#8c8c8c;"></div>
<div style="position:absolute;left:121px;top:183px;width:2px;height:2px;background:#8c8c8c;"></div>
<div style="position:absolute;left:137px;top:167px;width:110px;height:26px;background:#ffffff;border:1px solid #c6c6c6;box-sizing:border-box;"></div>
<svg style="position:absolute;left:150px;top:176px;" width="11" height="10" viewBox="0 0 11 10"><path d="M0.6 0.6 L10.4 9.4 M10.4 0.6 L0.6 9.4" stroke="#c4c4c4" stroke-width="1.4"/></svg>
<svg style="position:absolute;left:186px;top:175px;" width="13" height="11" viewBox="0 0 13 11"><path d="M1 5.8 L4.8 9.8 L12.2 1" fill="none" stroke="#c4c4c4" stroke-width="2.2"/></svg>
<div class="t" style="left:221.5px;top:168.70px;font-size:13.5px;color:#444444;font-weight:normal;font-family:'Liberation Serif',serif;font-style:italic;font-weight:bold;">f</div>
<div class="t" style="left:227.3px;top:173.38px;font-size:9.5px;color:#444444;font-weight:normal;font-family:'Liberation Serif',serif;font-style:italic;font-weight:bold;">x</div>
<div style="position:absolute;left:250px;top:167px;width:665px;height:26px;background:#ffffff;border:1px solid #c6c6c6;box-sizing:border-box;"></div>
<div style="position:absolute;left:250px;top:167px;width:1665px;height:26px;background:#ffffff;border:1px solid #c6c6c6;box-sizing:border-box;"></div>
<svg style="position:absolute;left:1903px;top:176px;" width="8" height="6" viewBox="0 0 8 6"><path d="M0.7 0.7 L3.75 4 L6.8 0.7" fill="none" stroke="#505050" stroke-width="1.4"/></svg>
<div style="position:absolute;left:0px;top:203px;width:1920px;height:20px;background:#e6e6e6;"></div>
<div style="position:absolute;left:0px;top:223px;width:25px;height:220px;background:#e6e6e6;"></div>
<div style="position:absolute;left:1853px;top:203px;width:67px;height:19px;background:#d2d2d2;"></div>
<div style="position:absolute;left:0px;top:283px;width:25px;height:19px;background:#d2d2d2;"></div>
<div style="position:absolute;left:225px;top:206px;width:1px;height:16px;background:linear-gradient(#e0e0e0,#a9a9a9);"></div>
<div style="position:absolute;left:425px;top:206px;width:1px;height:16px;background:linear-gradient(#e0e0e0,#a9a9a9);"></div>
<div style="position:absolute;left:625px;top:206px;width:1px;height:16px;background:linear-gradient(#e0e0e0,#a9a9a9);"></div>
<div style="position:absolute;left:825px;top:206px;width:1px;height:16px;background:linear-gradient(#e0e0e0,#a9a9a9);"></div>
<div style="position:absolute;left:1025px;top:206px;width:1px;height:16px;background:linear-gradient(#e0e0e0,#a9a9a9);"></div>
<div style="position:absolute;left:1253px;top:206px;width:1px;height:16px;background:linear-gradient(#e0e0e0,#a9a9a9);"></div>
<div style="position:absolute;left:1453px;top:206px;width:1px;height:16px;background:linear-gradient(#e0e0e0,#a9a9a9);"></div>
<div style="position:absolute;left:1653px;top:206px;width:1px;height:16px;background:linear-gradient(#e0e0e0,#a9a9a9);"></div>
<div style="position:absolute;left:1853px;top:206px;width:1px;height:16px;background:linear-gradient(#e0e0e0,#a9a9a9);"></div>
<div style="position:absolute;left:25px;top:203px;width:1px;height:240px;background:#ababab;"></div>
<div style="position:absolute;left:0px;top:222px;width:1920px;height:1px;background:#ababab;"></div>
<svg style="position:absolute;left:10px;top:207px;" width="13" height="13" viewBox="0 0 13 13"><path d="M11.7 0.5 V11.7 H0.2 Z" fill="#b4b4b4"/></svg>
<div class="t" style="left:-174.5px;width:600px;text-align:center;top:204.24px;font-size:12px;color:#262626;font-weight:normal;">A</div>
<div class="t" style="left:25.5px;width:600px;text-align:center;top:204.24px;font-size:12px;color:#262626;font-weight:normal;">B</div>
<div class="t" style="left:225.5px;width:600px;text-align:center;top:204.24px;font-size:12px;color:#262626;font-weight:normal;">C</div>
<div class="t" style="left:425.5px;width:600px;text-align:center;top:204.24px;font-size:12px;color:#262626;font-weight:normal;">D</div>
<div class="t" style="left:625.5px;width:600px;text-align:center;top:204.24px;font-size:12px;color:#262626;font-weight:normal;">E</div>
<div class="t" style="left:839.5px;width:600px;text-align:center;top:204.24px;font-size:12px;color:#262626;font-weight:normal;">F</div>
<div class="t" style="left:1053.5px;width:600px;text-align:center;top:204.24px;font-size:12px;color:#262626;font-weight:normal;">G</div>
<div class="t" style="left:1253.5px;width:600px;text-align:center;top:204.24px;font-size:12px;color:#262626;font-weight:normal;">H</div>
<div class="t" style="left:1453.5px;width:600px;text-align:center;top:204.24px;font-size:12px;color:#262626;font-weight:normal;">I</div>
<div style="position:absolute;left:1853px;top:221px;width:67px;height:2px;background:#217346;"></div>
<div style="position:absolute;left:0px;top:242px;width:25px;height:1px;background:#c8c8c8;"></div>
<div class="t" style="left:-287px;width:600px;text-align:center;top:225.34px;font-size:12px;color:#262626;font-weight:normal;">1</div>
<div style="position:absolute;left:0px;top:262px;width:25px;height:1px;background:#c8c8c8;"></div>
<div class="t" style="left:-287px;width:600px;text-align:center;top:245.34px;font-size:12px;color:#262626;font-weight:normal;">2</div>
<div style="position:absolute;left:0px;top:282px;width:25px;height:1px;background:#c8c8c8;"></div>
<div class="t" style="left:-287px;width:600px;text-align:center;top:265.34px;font-size:12px;color:#262626;font-weight:normal;">3</div>
<div style="position:absolute;left:0px;top:302px;width:25px;height:1px;background:#c8c8c8;"></div>
<div class="t" style="left:-287px;width:600px;text-align:center;top:285.34px;font-size:12px;color:#217346;font-weight:normal;">4</div>
<div style="position:absolute;left:0px;top:322px;width:25px;height:1px;background:#c8c8c8;"></div>
<div class="t" style="left:-287px;width:600px;text-align:center;top:305.34px;font-size:12px;color:#262626;font-weight:normal;">5</div>
<div style="position:absolute;left:0px;top:342px;width:25px;height:1px;background:#c8c8c8;"></div>
<div class="t" style="left:-287px;width:600px;text-align:center;top:325.34px;font-size:12px;color:#262626;font-weight:normal;">6</div>
<div style="position:absolute;left:0px;top:362px;width:25px;height:1px;background:#c8c8c8;"></div>
<div class="t" style="left:-287px;width:600px;text-align:center;top:345.34px;font-size:12px;color:#262626;font-weight:normal;">7</div>
<div style="position:absolute;left:0px;top:382px;width:25px;height:1px;background:#c8c8c8;"></div>
<div class="t" style="left:-287px;width:600px;text-align:center;top:365.34px;font-size:12px;color:#262626;font-weight:normal;">8</div>
<div style="position:absolute;left:0px;top:402px;width:25px;height:1px;background:#c8c8c8;"></div>
<div class="t" style="left:-287px;width:600px;text-align:center;top:385.34px;font-size:12px;color:#262626;font-weight:normal;">9</div>
<div style="position:absolute;left:0px;top:422px;width:25px;height:1px;background:#c8c8c8;"></div>
<div class="t" style="left:-287px;width:600px;text-align:center;top:405.34px;font-size:12px;color:#262626;font-weight:normal;">10</div>
<div style="position:absolute;left:0px;top:442px;width:25px;height:1px;background:#c8c8c8;"></div>
<div class="t" style="left:-287px;width:600px;text-align:center;top:425.34px;font-size:12px;color:#262626;font-weight:normal;">11</div>
<div style="position:absolute;left:225px;top:223px;width:1px;height:220px;background:#d4d4d4;"></div>
<div style="position:absolute;left:425px;top:223px;width:1px;height:220px;background:#d4d4d4;"></div>
<div style="position:absolute;left:625px;top:223px;width:1px;height:220px;background:#d4d4d4;"></div>
<div style="position:absolute;left:825px;top:223px;width:1px;height:220px;background:#d4d4d4;"></div>
<div style="position:absolute;left:1025px;top:223px;width:1px;height:220px;background:#d4d4d4;"></div>
<div style="position:absolute;left:1253px;top:223px;width:1px;height:220px;background:#d4d4d4;"></div>
<div style="position:absolute;left:1453px;top:223px;width:1px;height:220px;background:#d4d4d4;"></div>
<div style="position:absolute;left:1653px;top:223px;width:1px;height:220px;background:#d4d4d4;"></div>
<div style="position:absolute;left:1853px;top:223px;width:1px;height:220px;background:#d4d4d4;"></div>
<div style="position:absolute;left:26px;top:242px;width:1894px;height:1px;background:#a6a6a6;"></div>
<div style="position:absolute;left:26px;top:262px;width:1894px;height:1px;background:#000000;"></div>
<div style="position:absolute;left:26px;top:282px;width:1894px;height:1px;background:#000000;"></div>
<div style="position:absolute;left:26px;top:302px;width:1894px;height:1px;background:#000000;"></div>
<div style="position:absolute;left:26px;top:322px;width:1894px;height:1px;background:#000000;"></div>
<div style="position:absolute;left:26px;top:342px;width:1894px;height:1px;background:#000000;"></div>
<div style="position:absolute;left:26px;top:362px;width:1894px;height:1px;background:#000000;"></div>
<div style="position:absolute;left:26px;top:382px;width:1894px;height:1px;background:#000000;"></div>
<div style="position:absolute;left:26px;top:402px;width:1894px;height:1px;background:#000000;"></div>
<div style="position:absolute;left:26px;top:422px;width:1894px;height:1px;background:#000000;"></div>
<div style="position:absolute;left:26px;top:442px;width:1894px;height:1px;background:#000000;"></div>
<div style="position:absolute;left:208px;top:224px;width:17px;height:17px;background:#f3f5f9;border:1px solid #aab0ba;box-sizing:border-box;"></div>
<svg style="position:absolute;left:212px;top:231px;" width="8" height="5" viewBox="0 0 8 5"><path d="M0 0 H7.5 L3.75 4 Z" fill="#6b6b6b"/></svg>
<div style="position:absolute;left:408px;top:224px;width:17px;height:17px;background:#f3f5f9;border:1px solid #aab0ba;box-sizing:border-box;"></div>
<svg style="position:absolute;left:412px;top:231px;" width="8" height="5" viewBox="0 0 8 5"><path d="M0 0 H7.5 L3.75 4 Z" fill="#6b6b6b"/></svg>
<div style="position:absolute;left:608px;top:224px;width:17px;height:17px;background:#f3f5f9;border:1px solid #aab0ba;box-sizing:border-box;"></div>
<svg style="position:absolute;left:612px;top:231px;" width="8" height="5" viewBox="0 0 8 5"><path d="M0 0 H7.5 L3.75 4 Z" fill="#6b6b6b"/></svg>
<div style="position:absolute;left:808px;top:224px;width:17px;height:17px;background:#f3f5f9;border:1px solid #aab0ba;box-sizing:border-box;"></div>
<svg style="position:absolute;left:812px;top:231px;" width="8" height="5" viewBox="0 0 8 5"><path d="M0 0 H7.5 L3.75 4 Z" fill="#6b6b6b"/></svg>
<div style="position:absolute;left:1008px;top:224px;width:17px;height:17px;background:#f3f5f9;border:1px solid #aab0ba;box-sizing:border-box;"></div>
<svg style="position:absolute;left:1012px;top:231px;" width="8" height="5" viewBox="0 0 8 5"><path d="M0 0 H7.5 L3.75 4 Z" fill="#6b6b6b"/></svg>
<div style="position:absolute;left:1236px;top:224px;width:17px;height:17px;background:#f3f5f9;border:1px solid #aab0ba;box-sizing:border-box;"></div>
<svg style="position:absolute;left:1240px;top:231px;" width="8" height="5" viewBox="0 0 8 5"><path d="M0 0 H7.5 L3.75 4 Z" fill="#6b6b6b"/></svg>
<div style="position:absolute;left:1436px;top:224px;width:17px;height:17px;background:#f3f5f9;border:1px solid #aab0ba;box-sizing:border-box;"></div>
<svg style="position:absolute;left:1440px;top:231px;" width="8" height="5" viewBox="0 0 8 5"><path d="M0 0 H7.5 L3.75 4 Z" fill="#6b6b6b"/></svg>
<div style="position:absolute;left:1636px;top:224px;width:17px;height:17px;background:#f3f5f9;border:1px solid #aab0ba;box-sizing:border-box;"></div>
<svg style="position:absolute;left:1640px;top:231px;" width="8" height="5" viewBox="0 0 8 5"><path d="M0 0 H7.5 L3.75 4 Z" fill="#6b6b6b"/></svg>
<div style="position:absolute;left:1836px;top:224px;width:17px;height:17px;background:#f3f5f9;border:1px solid #aab0ba;box-sizing:border-box;"></div>
<svg style="position:absolute;left:1840px;top:231px;" width="8" height="5" viewBox="0 0 8 5"><path d="M0 0 H7.5 L3.75 4 Z" fill="#6b6b6b"/></svg>
<div class="t" style="left:26px;top:223.96px;font-size:12.8px;color:#000;width:182px;overflow:hidden;padding-left:2px;box-sizing:border-box;"><span style="display:inline-block;transform:scaleX(0.9855);transform-origin:0 0;">RDFD Kodu</span></div>
<div class="t" style="left:226px;top:223.96px;font-size:12.8px;color:#000;width:182px;overflow:hidden;padding-left:2px;box-sizing:border-box;"><span style="display:inline-block;transform:scaleX(0.9873);transform-origin:0 0;">RDF Kodu</span></div>
<div class="t" style="left:426px;top:223.96px;font-size:12.8px;color:#000;width:182px;overflow:hidden;padding-left:2px;box-sizing:border-box;"><span style="display:inline-block;transform:scaleX(1.0140);transform-origin:0 0;">RDF Tanımı</span></div>
<div class="t" style="left:626px;top:223.96px;font-size:12.8px;color:#000;width:182px;overflow:hidden;padding-left:2px;box-sizing:border-box;"><span style="display:inline-block;transform:scaleX(1.0474);transform-origin:0 0;">Revizyon No</span></div>
<div class="t" style="left:826px;top:223.96px;font-size:12.8px;color:#000;width:182px;overflow:hidden;padding-left:2px;box-sizing:border-box;"><span style="display:inline-block;transform:scaleX(1.0860);transform-origin:0 0;">Revizyon Tarihi</span></div>
<div class="t" style="left:1026px;top:223.96px;font-size:12.8px;color:#000;width:210px;overflow:hidden;padding-left:2px;box-sizing:border-box;"><span style="display:inline-block;transform:scaleX(1.0707);transform-origin:0 0;">Statü</span></div>
<div class="t" style="left:1254px;top:223.96px;font-size:12.8px;color:#000;width:182px;overflow:hidden;padding-left:2px;box-sizing:border-box;"><span style="display:inline-block;transform:scaleX(1.0607);transform-origin:0 0;">Proses Öğeleri (Sistem, Alt Sistem)</span></div>
<div class="t" style="left:1454px;top:223.96px;font-size:12.8px;color:#000;width:182px;overflow:hidden;padding-left:2px;box-sizing:border-box;"><span style="display:inline-block;transform:scaleX(1.0516);transform-origin:0 0;">Proses İş Öğeleri 4M Tipi (İnsan)</span></div>
<div class="t" style="left:1654px;top:223.96px;font-size:12.8px;color:#000;width:182px;overflow:hidden;padding-left:2px;box-sizing:border-box;"><span style="display:inline-block;transform:scaleX(1.0691);transform-origin:0 0;">Proses Adımı ve Ürün Karakteristiği</span></div>
<div class="t" style="left:1854px;top:223.96px;font-size:12.8px;color:#000;width:246px;overflow:hidden;padding-left:2px;box-sizing:border-box;"><span style="display:inline-block;transform:scaleX(1.0492);transform-origin:0 0;">Proses İş Öğeleri</span></div>
<div class="t" style="left:26px;top:243.96px;font-size:12.8px;color:#000;width:199px;overflow:hidden;padding-left:2px;box-sizing:border-box;"><span style="display:inline-block;transform:scaleX(0.9808);transform-origin:0 0;">RD.002.001</span></div>
<div class="t" style="left:226px;top:243.96px;font-size:12.8px;color:#000;width:199px;overflow:hidden;padding-left:2px;box-sizing:border-box;"><span style="display:inline-block;transform:scaleX(0.9677);transform-origin:0 0;">RD.002</span></div>
<div class="t" style="left:426px;top:243.96px;font-size:12.8px;color:#000;width:199px;overflow:hidden;padding-left:2px;box-sizing:border-box;"><span style="display:inline-block;transform:scaleX(1.0489);transform-origin:0 0;">A Süreci</span></div>
<div class="t" style="left:625px;top:243.96px;font-size:12.8px;color:#000;width:198px;text-align:right;overflow:hidden;"><span style="display:inline-block;transform:scaleX(0.9833);transform-origin:100% 0;">0</span></div>
<div class="t" style="left:825px;top:243.96px;font-size:12.8px;color:#000;width:198px;text-align:right;overflow:hidden;"><span style="display:inline-block;transform:scaleX(1.0010);transform-origin:100% 0;">6.04.2022</span></div>
<div class="t" style="left:1026px;top:243.96px;font-size:12.8px;color:#000;width:227px;overflow:hidden;padding-left:2px;box-sizing:border-box;"><span style="display:inline-block;transform:scaleX(1.0474);transform-origin:0 0;">Taslak</span></div>
<div class="t" style="left:26px;top:263.96px;font-size:12.8px;color:#000;width:199px;overflow:hidden;padding-left:2px;box-sizing:border-box;"><span style="display:inline-block;transform:scaleX(0.9808);transform-origin:0 0;">RD.002.002</span></div>
<div class="t" style="left:226px;top:263.96px;font-size:12.8px;color:#000;width:199px;overflow:hidden;padding-left:2px;box-sizing:border-box;"><span style="display:inline-block;transform:scaleX(0.9677);transform-origin:0 0;">RD.002</span></div>
<div class="t" style="left:426px;top:263.96px;font-size:12.8px;color:#000;width:199px;overflow:hidden;padding-left:2px;box-sizing:border-box;"><span style="display:inline-block;transform:scaleX(1.0489);transform-origin:0 0;">A Süreci</span></div>
<div class="t" style="left:625px;top:263.96px;font-size:12.8px;color:#000;width:198px;text-align:right;overflow:hidden;"><span style="display:inline-block;transform:scaleX(0.9833);transform-origin:100% 0;">0</span></div>
<div class="t" style="left:825px;top:263.96px;font-size:12.8px;color:#000;width:198px;text-align:right;overflow:hidden;"><span style="display:inline-block;transform:scaleX(0.9990);transform-origin:100% 0;">23.05.2022</span></div>
<div class="t" style="left:1026px;top:263.96px;font-size:12.8px;color:#000;width:227px;overflow:hidden;padding-left:2px;box-sizing:border-box;"><span style="display:inline-block;transform:scaleX(1.0901);transform-origin:0 0;">Tamamlandı</span></div>
<div class="t" style="left:1254px;top:263.96px;font-size:12.8px;color:#000;width:199px;overflow:hidden;padding-left:2px;box-sizing:border-box;"><span style="display:inline-block;transform:scaleX(1.0467);transform-origin:0 0;">Süreç</span></div>
<div class="t" style="left:1454px;top:263.96px;font-size:12.8px;color:#000;width:199px;overflow:hidden;padding-left:2px;box-sizing:border-box;"><span style="display:inline-block;transform:scaleX(1.1148);transform-origin:0 0;">Makina</span></div>
<div class="t" style="left:1654px;top:263.96px;font-size:12.8px;color:#000;width:199px;overflow:hidden;padding-left:2px;box-sizing:border-box;"><span style="display:inline-block;transform:scaleX(1.1633);transform-origin:0 0;">test</span></div>
<div class="t" style="left:1854px;top:263.96px;font-size:12.8px;color:#000;width:246px;overflow:hidden;padding-left:2px;box-sizing:border-box;"><span style="display:inline-block;transform:scaleX(1.1633);transform-origin:0 0;">test</span></div>
<div class="t" style="left:26px;top:283.96px;font-size:12.8px;color:#000;width:199px;overflow:hidden;padding-left:2px;box-sizing:border-box;"><span style="display:inline-block;transform:scaleX(0.9808);transform-origin:0 0;">RD.002.003</span></div>
<div class="t" style="left:226px;top:283.96px;font-size:12.8px;color:#000;width:199px;overflow:hidden;padding-left:2px;box-sizing:border-box;"><span style="display:inline-block;transform:scaleX(0.9677);transform-origin:0 0;">RD.002</span></div>
<div class="t" style="left:426px;top:283.96px;font-size:12.8px;color:#000;width:199px;overflow:hidden;padding-left:2px;box-sizing:border-box;"><span style="display:inline-block;transform:scaleX(1.0489);transform-origin:0 0;">A Süreci</span></div>
<div class="t" style="left:625px;top:283.96px;font-size:12.8px;color:#000;width:198px;text-align:right;overflow:hidden;"><span style="display:inline-block;transform:scaleX(0.9833);transform-origin:100% 0;">0</span></div>
<div class="t" style="left:825px;top:283.96px;font-size:12.8px;color:#000;width:198px;text-align:right;overflow:hidden;"><span style="display:inline-block;transform:scaleX(0.9990);transform-origin:100% 0;">24.05.2022</span></div>
<div class="t" style="left:1026px;top:283.96px;font-size:12.8px;color:#000;width:227px;overflow:hidden;padding-left:2px;box-sizing:border-box;"><span style="display:inline-block;transform:scaleX(1.0266);transform-origin:0 0;">Kontrol Planı Statüsü ( Furkan BAŞ )</span></div>
<div class="t" style="left:1254px;top:283.96px;font-size:12.8px;color:#000;width:199px;overflow:hidden;padding-left:2px;box-sizing:border-box;"><span style="display:inline-block;transform:scaleX(1.0467);transform-origin:0 0;">Süreç</span></div>
<div class="t" style="left:26px;top:303.96px;font-size:12.8px;color:#000;width:199px;overflow:hidden;padding-left:2px;box-sizing:border-box;"><span style="display:inline-block;transform:scaleX(0.9808);transform-origin:0 0;">RD.003.001</span></div>
<div class="t" style="left:226px;top:303.96px;font-size:12.8px;color:#000;width:199px;overflow:hidden;padding-left:2px;box-sizing:border-box;"><span style="display:inline-block;transform:scaleX(0.9677);transform-origin:0 0;">RD.003</span></div>
<div class="t" style="left:426px;top:303.96px;font-size:12.8px;color:#000;width:199px;overflow:hidden;padding-left:2px;box-sizing:border-box;"><span style="display:inline-block;transform:scaleX(1.0597);transform-origin:0 0;">B süreci</span></div>
<div class="t" style="left:625px;top:303.96px;font-size:12.8px;color:#000;width:198px;text-align:right;overflow:hidden;"><span style="display:inline-block;transform:scaleX(0.9833);transform-origin:100% 0;">0</span></div>
<div class="t" style="left:825px;top:303.96px;font-size:12.8px;color:#000;width:198px;text-align:right;overflow:hidden;"><span style="display:inline-block;transform:scaleX(1.0010);transform-origin:100% 0;">8.04.2022</span></div>
<div class="t" style="left:1026px;top:303.96px;font-size:12.8px;color:#000;width:227px;overflow:hidden;padding-left:2px;box-sizing:border-box;"><span style="display:inline-block;transform:scaleX(1.0901);transform-origin:0 0;">Tamamlandı</span></div>
<div class="t" style="left:1254px;top:303.96px;font-size:12.8px;color:#000;width:199px;overflow:hidden;padding-left:2px;box-sizing:border-box;"><span style="display:inline-block;transform:scaleX(1.1069);transform-origin:0 0;">Genel Özellikler</span></div>
<div class="t" style="left:1454px;top:303.96px;font-size:12.8px;color:#000;width:199px;overflow:hidden;padding-left:2px;box-sizing:border-box;"><span style="display:inline-block;transform:scaleX(1.0784);transform-origin:0 0;">insan</span></div>
<div class="t" style="left:26px;top:323.96px;font-size:12.8px;color:#000;width:199px;overflow:hidden;padding-left:2px;box-sizing:border-box;"><span style="display:inline-block;transform:scaleX(0.9808);transform-origin:0 0;">RD.003.002</span></div>
<div class="t" style="left:226px;top:323.96px;font-size:12.8px;color:#000;width:199px;overflow:hidden;padding-left:2px;box-sizing:border-box;"><span style="display:inline-block;transform:scaleX(0.9677);transform-origin:0 0;">RD.003</span></div>
<div class="t" style="left:426px;top:323.96px;font-size:12.8px;color:#000;width:199px;overflow:hidden;padding-left:2px;box-sizing:border-box;"><span style="display:inline-block;transform:scaleX(1.0597);transform-origin:0 0;">B süreci</span></div>
<div class="t" style="left:625px;top:323.96px;font-size:12.8px;color:#000;width:198px;text-align:right;overflow:hidden;"><span style="display:inline-block;transform:scaleX(0.9833);transform-origin:100% 0;">0</span></div>
<div class="t" style="left:825px;top:323.96px;font-size:12.8px;color:#000;width:198px;text-align:right;overflow:hidden;"><span style="display:inline-block;transform:scaleX(1.0010);transform-origin:100% 0;">8.04.2022</span></div>
<div class="t" style="left:1026px;top:323.96px;font-size:12.8px;color:#000;width:227px;overflow:hidden;padding-left:2px;box-sizing:border-box;"><span style="display:inline-block;transform:scaleX(1.0901);transform-origin:0 0;">Tamamlandı</span></div>
<div class="t" style="left:1254px;top:323.96px;font-size:12.8px;color:#000;width:199px;overflow:hidden;padding-left:2px;box-sizing:border-box;"><span style="display:inline-block;transform:scaleX(1.0890);transform-origin:0 0;">deneme 2</span></div>
<div class="t" style="left:26px;top:343.96px;font-size:12.8px;color:#000;width:199px;overflow:hidden;padding-left:2px;box-sizing:border-box;"><span style="display:inline-block;transform:scaleX(0.9808);transform-origin:0 0;">RD.005.001</span></div>
<div class="t" style="left:226px;top:343.96px;font-size:12.8px;color:#000;width:199px;overflow:hidden;padding-left:2px;box-sizing:border-box;"><span style="display:inline-block;transform:scaleX(0.9677);transform-origin:0 0;">RD.005</span></div>
<div class="t" style="left:426px;top:343.96px;font-size:12.8px;color:#000;width:199px;overflow:hidden;padding-left:2px;box-sizing:border-box;"><span style="display:inline-block;transform:scaleX(0.9461);transform-origin:0 0;">ABC ÜRÜNÜ FMEA</span></div>
<div class="t" style="left:625px;top:343.96px;font-size:12.8px;color:#000;width:198px;text-align:right;overflow:hidden;"><span style="display:inline-block;transform:scaleX(0.9833);transform-origin:100% 0;">0</span></div>
<div class="t" style="left:825px;top:343.96px;font-size:12.8px;color:#000;width:198px;text-align:right;overflow:hidden;"><span style="display:inline-block;transform:scaleX(0.9990);transform-origin:100% 0;">24.05.2022</span></div>
<div class="t" style="left:1026px;top:343.96px;font-size:12.8px;color:#000;width:227px;overflow:hidden;padding-left:2px;box-sizing:border-box;"><span style="display:inline-block;transform:scaleX(1.0797);transform-origin:0 0;">Aksiyon Bekleme</span></div>
<div class="t" style="left:1254px;top:343.96px;font-size:12.8px;color:#000;width:199px;overflow:hidden;padding-left:2px;box-sizing:border-box;"><span style="display:inline-block;transform:scaleX(0.9434);transform-origin:0 0;">ABC-001</span></div>
<div class="t" style="left:1454px;top:343.96px;font-size:12.8px;color:#000;width:199px;overflow:hidden;padding-left:2px;box-sizing:border-box;"><span style="display:inline-block;transform:scaleX(1.1390);transform-origin:0 0;">Makine</span></div>
<div class="t" style="left:26px;top:363.96px;font-size:12.8px;color:#000;width:199px;overflow:hidden;padding-left:2px;box-sizing:border-box;"><span style="display:inline-block;transform:scaleX(0.9808);transform-origin:0 0;">RD.005.002</span></div>
<div class="t" style="left:226px;top:363.96px;font-size:12.8px;color:#000;width:199px;overflow:hidden;padding-left:2px;box-sizing:border-box;"><span style="display:inline-block;transform:scaleX(0.9677);transform-origin:0 0;">RD.005</span></div>
<div class="t" style="left:426px;top:363.96px;font-size:12.8px;color:#000;width:199px;overflow:hidden;padding-left:2px;box-sizing:border-box;"><span style="display:inline-block;transform:scaleX(0.9461);transform-origin:0 0;">ABC ÜRÜNÜ FMEA</span></div>
<div class="t" style="left:625px;top:363.96px;font-size:12.8px;color:#000;width:198px;text-align:right;overflow:hidden;"><span style="display:inline-block;transform:scaleX(0.9833);transform-origin:100% 0;">0</span></div>
<div class="t" style="left:825px;top:363.96px;font-size:12.8px;color:#000;width:198px;text-align:right;overflow:hidden;"><span style="display:inline-block;transform:scaleX(0.9990);transform-origin:100% 0;">25.05.2022</span></div>
<div class="t" style="left:1026px;top:363.96px;font-size:12.8px;color:#000;width:227px;overflow:hidden;padding-left:2px;box-sizing:border-box;"><span style="display:inline-block;transform:scaleX(1.0797);transform-origin:0 0;">Aksiyon Bekleme</span></div>
<div class="t" style="left:26px;top:383.96px;font-size:12.8px;color:#000;width:199px;overflow:hidden;padding-left:2px;box-sizing:border-box;"><span style="display:inline-block;transform:scaleX(0.9808);transform-origin:0 0;">RD.006.001</span></div>
<div class="t" style="left:226px;top:383.96px;font-size:12.8px;color:#000;width:199px;overflow:hidden;padding-left:2px;box-sizing:border-box;"><span style="display:inline-block;transform:scaleX(0.9677);transform-origin:0 0;">RD.006</span></div>
<div class="t" style="left:426px;top:383.96px;font-size:12.8px;color:#000;width:199px;overflow:hidden;padding-left:2px;box-sizing:border-box;"><span style="display:inline-block;transform:scaleX(0.9719);transform-origin:0 0;">P-FMEA</span></div>
<div class="t" style="left:625px;top:383.96px;font-size:12.8px;color:#000;width:198px;text-align:right;overflow:hidden;"><span style="display:inline-block;transform:scaleX(0.9833);transform-origin:100% 0;">1</span></div>
<div class="t" style="left:825px;top:383.96px;font-size:12.8px;color:#000;width:198px;text-align:right;overflow:hidden;"><span style="display:inline-block;transform:scaleX(0.9990);transform-origin:100% 0;">25.05.2022</span></div>
<div class="t" style="left:1026px;top:383.96px;font-size:12.8px;color:#000;width:227px;overflow:hidden;padding-left:2px;box-sizing:border-box;"><span style="display:inline-block;transform:scaleX(1.0474);transform-origin:0 0;">Taslak</span></div>
<div class="t" style="left:1254px;top:383.96px;font-size:12.8px;color:#000;width:199px;overflow:hidden;padding-left:2px;box-sizing:border-box;"><span style="display:inline-block;transform:scaleX(0.9738);transform-origin:0 0;">AEM HORTUM UÇ KESİM İŞLEMİ</span></div>
<div class="t" style="left:1454px;top:383.96px;font-size:12.8px;color:#000;width:199px;overflow:hidden;padding-left:2px;box-sizing:border-box;"><span style="display:inline-block;transform:scaleX(0.9557);transform-origin:0 0;">KESİM MAKİNESİ OPERATÖR İŞ EMRİ</span></div>
<div class="t" style="left:1654px;top:383.96px;font-size:12.8px;color:#000;width:199px;overflow:hidden;padding-left:2px;box-sizing:border-box;"><span style="display:inline-block;transform:scaleX(0.9557);transform-origin:0 0;">YARI MAMULÜN UYGUN BOYDA KESİLMESİ</span></div>
<div class="t" style="left:1854px;top:383.96px;font-size:12.8px;color:#000;width:246px;overflow:hidden;padding-left:2px;box-sizing:border-box;"><span style="display:inline-block;transform:scaleX(0.9755);transform-origin:0 0;">KESİM MAKİNESİ</span></div>
<div style="position:absolute;left:24px;top:283px;width:2px;height:19px;background:#217346;"></div>
<div style="position:absolute;left:1852px;top:281px;width:68px;height:2px;background:#217346;"></div>
<div style="position:absolute;left:1852px;top:302px;width:68px;height:2px;background:#217346;"></div>
<div style="position:absolute;left:1852px;top:281px;width:2px;height:23px;background:#217346;"></div>
</body></html>
